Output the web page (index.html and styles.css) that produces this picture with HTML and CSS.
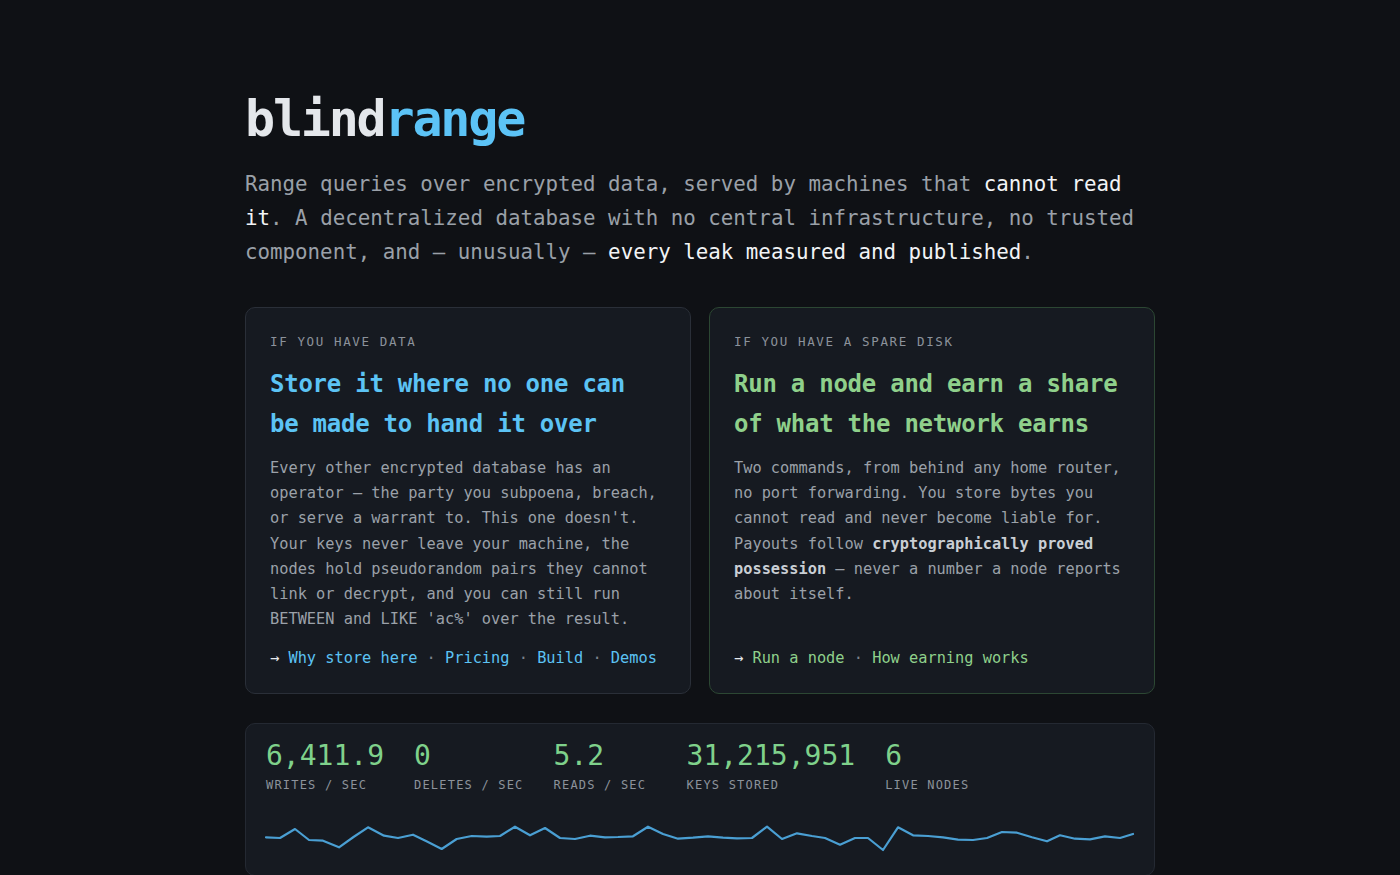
FILE: index.html
```html
<!DOCTYPE html>
<html lang="en">
<head>
<meta charset="utf-8">
<title>blindrange</title>
<link rel="stylesheet" href="styles.css">
</head>
<body>
<main class="page">
  <h1 class="logo"><span class="logo-a">blind</span><span class="logo-b">range</span></h1>
  <p class="intro">Range queries over encrypted data, served by machines that <span class="hi">cannot read it</span>. A decentralized database with no central infrastructure, no trusted component, and — unusually — <span class="hi">every leak measured and published</span>.</p>

  <section class="cards">
    <article class="card card-data">
      <div class="eyebrow">IF YOU HAVE DATA</div>
      <h2 class="card-title blue">Store it where no one can<br>be made to hand it over</h2>
      <p class="card-body">Every other encrypted database has an operator — the party you subpoena, breach, or serve a warrant to. This one doesn't. Your keys never leave your machine, the nodes hold pseudorandom pairs they cannot link or decrypt, and you can still run BETWEEN and LIKE 'ac%' over the result.</p>
      <div class="links blue-links"><span class="arrow">→</span> <a href="#">Why store here</a><span class="sep"> · </span><a href="#">Pricing</a><span class="sep"> · </span><a href="#">Build</a><span class="sep"> · </span><a href="#">Demos</a></div>
    </article>
    <article class="card card-disk">
      <div class="eyebrow">IF YOU HAVE A SPARE DISK</div>
      <h2 class="card-title green">Run a node and earn a share<br>of what the network earns</h2>
      <p class="card-body">Two commands, from behind any home router, no port forwarding. You store bytes you cannot read and never become liable for. Payouts follow <strong>cryptographically proved possession</strong> — never a number a node reports about itself.</p>
      <div class="links green-links"><span class="arrow">→</span> <a href="#">Run a node</a><span class="sep"> · </span><a href="#">How earning works</a></div>
    </article>
  </section>

  <section class="stats">
    <div class="stat-row">
      <div class="stat"><div class="num">6,411.9</div><div class="lbl">WRITES / SEC</div></div>
      <div class="stat"><div class="num">0</div><div class="lbl">DELETES / SEC</div></div>
      <div class="stat"><div class="num">5.2</div><div class="lbl">READS / SEC</div></div>
      <div class="stat"><div class="num">31,215,951</div><div class="lbl">KEYS STORED</div></div>
      <div class="stat"><div class="num">6</div><div class="lbl">LIVE NODES</div></div>
    </div>
    <svg class="spark" width="868" height="34" viewBox="0 0 868 34" aria-hidden="true">
      <polyline fill="none" stroke="#4a9fd3" stroke-width="2.2" stroke-linejoin="round" stroke-linecap="round"
        points="0,16.3 14,17 29,8 43,19 57,19.7 73,26.3 87.5,16 102,6.3 118,14.7 132,17 147,13.7 161,20.5 175.7,28 190.7,18 205.7,15 220.7,15.7 234,15 249,5.7 264,14.3 279,7 294,17 309,18 324,14.7 339,16.3 352,16 367,15.3 382,5.7 397,13 412,17.7 427,16.7 442,15.3 457,16.7 471,17.3 486,17 501,5.7 516,18 531,12.3 546,15 559,17 574,23.7 589,17 602,17 617,29 632,6.3 647,14.3 662,15 677,16.3 692,18.7 707,19 721,17 736,11 751,11.7 766,16.3 781,20.3 794,14.3 809,17.7 824,18.3 839,15.3 854,17 867,13"/>
    </svg>
  </section>
</main>
</body>
</html>
```

FILE: styles.css
```css
html, body {
  margin: 0;
  padding: 0;
  background: #0f1115;
}
body {
  font-family: "DejaVu Sans Mono", "Liberation Mono", monospace;
  color: #9aa0a8;
}
.page {
  width: 910px;
  margin: 0 auto;
  padding-top: 89px;
}
.logo {
  margin: 0;
  font-size: 50px;
  line-height: 60px;
  font-weight: bold;
  letter-spacing: -2.2px;
}
.logo-a { color: #e4e7eb; }
.logo-b { color: #5cc3f6; }
.intro {
  margin: 18px 0 0;
  font-size: 20.8px;
  line-height: 34px;
  color: #9aa0a8;
}
.intro .hi { color: #f2f4f6; }

.cards {
  margin-top: 38px;
  display: grid;
  grid-template-columns: 1fr 1fr;
  gap: 18px;
}
.card {
  background: #161a21;
  border: 1px solid #2a2f38;
  border-radius: 10px;
  padding: 26px 24px 21px;
  display: flex;
  flex-direction: column;
}
.card-disk {
  border-color: #2c4733;
}
.eyebrow {
  font-size: 12.5px;
  line-height: 15px;
  letter-spacing: 0.13em;
  color: #8c929b;
}
.card-title {
  margin: 15px 0 0;
  font-size: 24px;
  line-height: 40px;
  font-weight: bold;
  letter-spacing: -0.25px;
}
.card-title.blue { color: #5cc3f4; }
.card-title.green { color: #8fd08b; }
.card-body {
  margin: 12px 0 0;
  font-size: 15.3px;
  line-height: 25.2px;
  color: #9ba1a9;
}
.card-body strong {
  color: #c9ced4;
  font-weight: bold;
}
.links {
  margin-top: auto;
  padding-top: 14px;
  font-size: 15.3px;
  line-height: 25.2px;
}
.links a {
  text-decoration: none;
}
.arrow { color: #e8eaed; }
.sep { color: #7c828b; }
.blue-links a { color: #5cc3f4; }
.green-links a { color: #8fd08b; }

.stats {
  margin-top: 29px;
  background: #161a21;
  border: 1px solid #242932;
  border-radius: 10px;
  padding: 15px 20px 20px;
}
.stat-row {
  display: flex;
  gap: 30px;
}
.stat {
  min-width: 103px;
}
.num {
  font-size: 28px;
  line-height: 34px;
  color: #7fd18b;
}
.lbl {
  margin-top: 4px;
  font-size: 12px;
  line-height: 16px;
  letter-spacing: 0.1em;
  color: #8c929b;
}
.spark {
  display: block;
  margin-top: 28px;
  overflow: visible;
}
```
